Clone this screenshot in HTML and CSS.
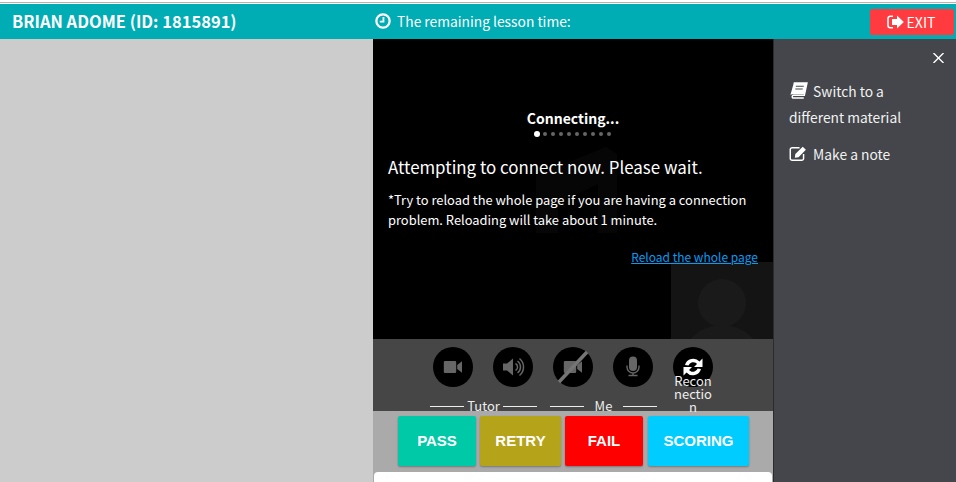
FILE: index.html
```html
<!DOCTYPE html>
<html lang="en">
<head>
<meta charset="utf-8">
<title>Lesson</title>
<link rel="stylesheet" href="styles.css">
</head>
<body>
<div class="top-stripe"></div>
<header class="topbar">
  <div class="student">BRIAN ADOME (ID: 1815891)</div>
  <div class="timer">
    <svg class="timer-icon" viewBox="0 0 14 14"><circle cx="7" cy="7" r="5.8" fill="none" stroke="#fff" stroke-width="2"/><path d="M7.4 3.4V7.6H4.2" fill="none" stroke="#fff" stroke-width="1.6"/></svg>
    <span>The remaining lesson time:</span>
  </div>
  <button class="exit">
    <svg class="exit-icon" viewBox="0 0 17 14"><path d="M6 1.2H3.2A2.2 2.2 0 0 0 1 3.4V10.6A2.2 2.2 0 0 0 3.2 12.8H6" fill="none" stroke="#fff" stroke-width="1.6"/><path d="M5 4H10V0.6L16.8 7 10 13.400V10H5Z" fill="#fff"/></svg>
    <span>EXIT</span>
  </button>
</header>
<main class="layout">
  <div class="left-pane"></div>
  <section class="center">
    <div class="video">
      <svg class="ghost" viewBox="0 0 400 300"><polygon points="163,136 233,108 244,115 244,194 225,194 225,145 185,165 185,194 163,194" fill="#060606"/></svg>
      <div class="connecting">
        <div class="connecting-title">Connecting...</div>
        <div class="dots"><i class="dot active"></i><i class="dot"></i><i class="dot"></i><i class="dot"></i><i class="dot"></i><i class="dot"></i><i class="dot"></i><i class="dot"></i><i class="dot"></i><i class="dot"></i></div>
      </div>
      <p class="wait">Attempting to connect now. Please wait.</p>
      <p class="note">*Try to reload the whole page if you are having a connection problem. Reloading will take about 1 minute.</p>
      <a class="reload" href="#">Reload the whole page</a>
      <div class="self-view">
        <svg viewBox="0 0 102 77" class="avatar"><circle cx="51" cy="41" r="24" fill="#1a1a1a"/><ellipse cx="51" cy="96" rx="38" ry="33" fill="#1a1a1a"/></svg>
      </div>
    </div>
    <div class="controls">
      <div class="ctrl-group">
        <div class="ctrl-icons">
          <div class="ctrl">
            <svg viewBox="0 0 40 40"><path d="M12 14H22A1.200 1.200 0 0 1 23.200 15.200V24.800A1.200 1.200 0 0 1 22 26H12A1.200 1.200 0 0 1 10.800 24.800V15.200A1.200 1.200 0 0 1 12 14ZM24.200 18L29 14.300V25.700L24.200 22Z" fill="#666"/></svg>
          </div>
          <div class="ctrl">
            <svg viewBox="0 0 40 40"><path d="M10 16.500H14L20 11.500V28.500L14 23.500H10Z" fill="#666"/><path d="M22.500 16.500A4 4 0 0 1 22.500 23.500M24.500 14A7.500 7.500 0 0 1 24.500 26M26.500 11.500A11 11 0 0 1 26.500 28.500" fill="none" stroke="#666" stroke-width="1.500"/></svg>
          </div>
        </div>
        <div class="ctrl-label"><i class="rule"></i><span>Tutor</span><i class="rule"></i></div>
      </div>
      <div class="ctrl-group">
        <div class="ctrl-icons">
          <div class="ctrl">
            <svg viewBox="0 0 40 40"><path d="M12 14H22A1.200 1.200 0 0 1 23.200 15.200V24.800A1.200 1.200 0 0 1 22 26H12A1.200 1.200 0 0 1 10.800 24.800V15.200A1.200 1.200 0 0 1 12 14ZM24.200 18L29 14.300V25.700L24.200 22Z" fill="#666"/><path d="M6 35L34 5" stroke="#757575" stroke-width="3.500"/></svg>
          </div>
          <div class="ctrl">
            <svg viewBox="0 0 40 40"><rect x="16" y="9.500" width="8" height="14.500" rx="4" fill="#666"/><path d="M14 18.500V20A6 6 0 0 0 26 20V18.500M20 26V28M15.500 28.500H24.500" fill="none" stroke="#666" stroke-width="1.400"/></svg>
          </div>
        </div>
        <div class="ctrl-label"><i class="rule"></i><span>Me</span><i class="rule"></i></div>
      </div>
      <div class="reconnect">
        <div class="ctrl">
          <svg viewBox="0 0 40 40"><path d="M12 18A8.500 8.500 0 0 1 26.500 14.500L29.500 11.500V20H21L24 17A5 5 0 0 0 15.500 18.500ZM28 22A8.500 8.500 0 0 1 13.500 25.500L10.500 28.500V20H19L16 23A5 5 0 0 0 24.500 21.500Z" fill="#fff"/></svg>
        </div>
        <div class="reconnect-label">Reconnection</div>
      </div>
    </div>
    <div class="actions">
      <button class="action pass">PASS</button>
      <button class="action retry">RETRY</button>
      <button class="action fail">FAIL</button>
      <button class="action scoring">SCORING</button>
    </div>
    <div class="panel"></div>
  </section>
  <aside class="sidebar">
    <svg class="close" viewBox="0 0 11 10"><path d="M0.500 0L10.500 10M10.500 0L0.500 10" stroke="#fff" stroke-width="1.400"/></svg>
    <div class="side-item">
      <svg class="side-icon" viewBox="0 0 18 16"><path d="M4.500 0.800H17L14.500 12.500H4A1.500 1.500 0 0 0 3.500 15H14" fill="none" stroke="#fff" stroke-width="1.400"/><path d="M4.500 0.800H17L14.500 11.500H3A2 2 0 0 0 1 13.500Z" fill="#fff"/><path d="M6.500 4H14M6 6.500H13" stroke="#44464b" stroke-width="1"/></svg>
      Switch to a<br>different material
    </div>
    <div class="side-item">
      <svg class="side-icon" viewBox="0 0 18 16"><path d="M10 2.500H3A1.800 1.800 0 0 0 1.200 4.300V12.700A1.800 1.800 0 0 0 3 14.500H12A1.800 1.800 0 0 0 13.800 12.700V8.500" fill="none" stroke="#fff" stroke-width="1.400"/><path d="M6 8.500L13 1.500L16 4.500L9 11.500L5.500 12Z" fill="#fff"/></svg>
      Make a note
    </div>
  </aside>
</main>
</body>
</html>
```
FILE: styles.css
```css
* { box-sizing: border-box; }
html, body { margin: 0; height: 100%; overflow: hidden; }
body { background: #fff; font-family: "Noto Sans CJK JP", "Noto Sans", sans-serif; color: #fff; }
.top-stripe { height: 4px; border-top: 2px solid #fff; border-bottom: 1px solid #fff; background: #b4b4b4; }
.topbar { height: 35px; background: #00adb5; display: flex; align-items: center; position: relative; }
.student { width: 373px; padding-left: 12px; font-size: 16.500px; font-weight: 700; line-height: 20px; margin-top: -2px; }
.timer { display: flex; align-items: center; gap: 6px; padding-left: 2px; font-size: 13.800px; flex: 1; line-height: 20px; margin-top: -2px; }
.timer-icon { width: 16px; height: 16px; }
.exit { width: 84px; height: 26px; margin: 0 2px 0 0; background: #ff3b3f; border: 0; border-radius: 2px; color: #fff; font: 14px "Noto Sans CJK JP", sans-serif; display: flex; align-items: center; justify-content: center; gap: 3px; padding: 0 2px 0 0; }
.exit-icon { width: 17px; height: 14px; }
.layout { display: flex; height: 443px; }
.left-pane { width: 373px; background: #ccc; }
.center { width: 400px; display: flex; flex-direction: column; background: #aaa; }
.video { height: 300px; background: #000; position: relative; padding: 69px 15px 0; flex: none; }
.ghost { position: absolute; left: 0; top: 0; width: 400px; height: 300px; }
.connecting, .wait, .note { position: relative; }
.connecting { text-align: center; }
.connecting-title { font-size: 14px; font-weight: 700; line-height: 20px; }
.dots { display: flex; justify-content: center; align-items: center; gap: 4px; height: 9px; margin-top: 1px; }
.dot { width: 4px; height: 4px; border-radius: 50%; background: #666; }
.dot.active { width: 6px; height: 6px; margin: 0 -1px; background: #fff; }
.wait { margin: 17px 0 0; font-size: 16.900px; line-height: 24px; white-space: nowrap; }
.note { margin: 11px 0 0; font-size: 12.900px; line-height: 20px; }
.reload { display: block; position: relative; z-index: 1; margin: 19px 0 0; text-align: right; font-size: 12px; line-height: 16px; color: #0a9bf0; }
.self-view { position: absolute; right: 0; bottom: 0; width: 102px; height: 77px; background: #141414; }
.avatar { display: block; width: 102px; height: 77px; }
.controls { height: 72px; background: #464646; display: flex; padding: 8px 0 0 47px; flex: none; }
.ctrl-group { width: 120px; }
.ctrl-icons { display: flex; gap: 20px; padding-left: 13px; }
.ctrl { width: 40px; height: 40px; border-radius: 50%; background: #000; flex: none; }
.ctrl svg { display: block; width: 40px; height: 40px; }
.ctrl-label { margin: 11px 0 0 10px; width: 107px; font-size: 13px; line-height: 16px; color: #eee; display: flex; align-items: center; justify-content: space-between; }
.ctrl-label span { flex: 1; text-align: center; }
.rule { width: 34px; height: 1px; background: #eee; }
.reconnect { width: 40px; margin-left: 13px; position: relative; z-index: 1; }
.reconnect-label { width: 40px; margin-top: -13px; font-size: 13px; line-height: 13px; text-align: center; word-break: break-all; color: #eee; }
.actions { height: 61px; display: flex; padding: 5px 0 0 25px; gap: 4px; flex: none; background: #aaa; }
.action { height: 50px; border: 0; border-radius: 2px; color: #fff; font: 700 15px "Liberation Sans", Arial, sans-serif; box-shadow: 0 1px 2px rgba(0,0,0,.3); padding: 0 0 2px; }
.pass { width: 78px; background: #00c9a7; }
.retry { width: 81px; background: #b5a31a; }
.fail { width: 78px; background: #f00; }
.scoring { width: 101px; margin-left: 1px; background: #0cf; }
.panel { flex: 1; background: #fff; margin: 0 1px; border-radius: 4px 4px 0 0; }
.sidebar { flex: 1; background: #44464b; border-left: 1px solid #2b2b2b; padding: 39px 15px 0; position: relative; font-size: 13.800px; line-height: 26px; color: #f2f2f2; }
.close { position: absolute; top: 13.500px; right: 12.500px; width: 11px; height: 10px; }
.side-item { margin-bottom: 11px; }
.side-icon { width: 19px; height: 17px; vertical-align: -2px; margin-right: 2px; }
```
